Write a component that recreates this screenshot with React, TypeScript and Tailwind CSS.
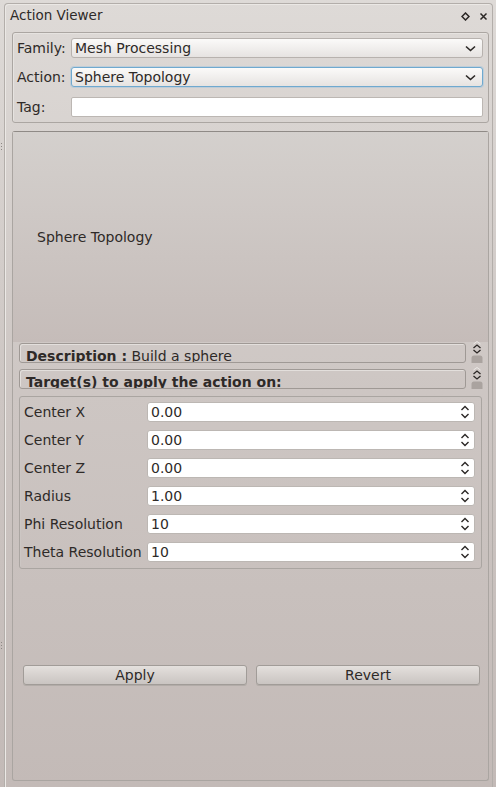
import React from "react";

const font = { fontFamily: '"DejaVu Sans", "Liberation Sans", sans-serif' };

function Chevron() {
  return (
    <svg width="11" height="7" viewBox="0 0 11 7" className="shrink-0">
      <path d="M1 1.5 L5.5 5.5 L10 1.5" fill="none" stroke="#2b2725" strokeWidth="1.6" />
    </svg>
  );
}

function SpinArrows() {
  return (
    <svg width="10" height="14" viewBox="0 0 10 14" className="shrink-0">
      <path d="M1.5 5 L5 1.5 L8.5 5" fill="none" stroke="#2b2725" strokeWidth="1.4" />
      <path d="M1.5 9 L5 12.5 L8.5 9" fill="none" stroke="#2b2725" strokeWidth="1.4" />
    </svg>
  );
}

function ScrollNub() {
  return (
    <svg width="14" height="24" viewBox="0 0 14 24" className="shrink-0">
      <path d="M3.5 4 L7 1.5 L10.5 4" fill="none" stroke="#ece9e6" strokeWidth="1" />
      <path d="M3.5 8 L7 5 L10.5 8" fill="none" stroke="#2b2725" strokeWidth="1.3" />
      <path d="M3.5 10 L7 13 L10.5 10" fill="none" stroke="#2b2725" strokeWidth="1.3" />
      <path d="M1.5 23 L1.5 18 Q1.5 15.5 4 15.5 L10 15.5 Q12.5 15.5 12.5 18 L12.5 23 Z" fill="#aaa39f" />
    </svg>
  );
}

function Combo({ value, focus }: { value: string; focus?: boolean }) {
  return (
    <div
      className={`flex-1 h-[20px] flex items-center justify-between pl-[3px] pr-[6px] rounded-[3px] border bg-gradient-to-b from-[#fbfaf9] to-[#e6e3e1] ${
        focus ? "border-[#6fa9cf] shadow-[0_0_0_1px_rgba(140,190,225,0.35)]" : "border-[#b7b2ae]"
      }`}
    >
      <span className="leading-none">{value}</span>
      <Chevron />
    </div>
  );
}

const params = [
  ["Center X", "0.00"],
  ["Center Y", "0.00"],
  ["Center Z", "0.00"],
  ["Radius", "1.00"],
  ["Phi Resolution", "10"],
  ["Theta Resolution", "10"],
];

export default function App() {
  return (
    <div
      className="relative w-[496px] h-[787px] overflow-hidden bg-gradient-to-b from-[#dedad7] via-[#cdc6c3] to-[#c3bab7] text-[14px] leading-[20px] text-[#2e2a28] pl-[4px] pr-[3px] pt-[3px]"
      style={font}
    >
      {/* splitter grips */}
      <div className="absolute left-[1px] top-[143px] flex flex-col gap-[2px]">
        <span className="w-[1px] h-[1px] bg-[#8d8884]" />
        <span className="w-[1px] h-[1px] bg-[#8d8884]" />
        <span className="w-[1px] h-[1px] bg-[#8d8884]" />
      </div>
      <div className="absolute left-[1px] top-[642px] flex flex-col gap-[2px]">
        <span className="w-[1px] h-[1px] bg-[#8d8884]" />
        <span className="w-[1px] h-[1px] bg-[#8d8884]" />
        <span className="w-[1px] h-[1px] bg-[#8d8884]" />
      </div>

      <div className="h-[784px] border-l border-t border-r border-[#b3aeaa] rounded-t-[4px] shadow-[inset_1px_1px_0_#ebe8e5] flex flex-col pl-[7px] pr-[3px]">
        {/* title bar */}
        <div className="h-[24px] flex items-center justify-between -ml-[2px] mr-[1px]">
          <span className="text-[13.5px] leading-none">Action Viewer</span>
          <div className="flex items-center gap-[9px]">
            <svg width="9" height="9" viewBox="0 0 9 9">
              <path d="M4.5 1 L8 4.5 L4.5 8 L1 4.5 Z" fill="none" stroke="#2b2725" strokeWidth="1.5" />
            </svg>
            <svg width="9" height="9" viewBox="0 0 9 9">
              <path d="M1.5 1.5 L7.5 7.5 M7.5 1.5 L1.5 7.5" fill="none" stroke="#2b2725" strokeWidth="1.5" />
            </svg>
          </div>
        </div>

        {/* selector group */}
        <div className="mt-[4px] h-[91px] border border-[#aba6a2] rounded-[3px] shadow-[inset_1px_1px_0_#e6e3e0] flex flex-col pt-[5px] pl-[4px] pr-[5px] gap-[9px]">
          <div className="flex items-center h-[20px]">
            <span className="w-[54px]">Family:</span>
            <Combo value="Mesh Processing" />
          </div>
          <div className="flex items-center h-[20px]">
            <span className="w-[54px]">Action:</span>
            <Combo value="Sphere Topology" focus />
          </div>
          <div className="flex items-center h-[20px] mt-[1px]">
            <span className="w-[54px]">Tag:</span>
            <div className="flex-1 h-[20px] bg-white border border-[#bcb7b3] rounded-[2px]" />
          </div>
        </div>

        {/* main frame */}
        <div className="mt-[8px] h-[650px] border border-[#aaa5a1] border-t-[#8f8a86] rounded-[3px] flex flex-col">
          <div className="h-[210px] flex items-center pl-[24px] bg-gradient-to-b from-[#d4d0cd] to-[#c5bcb9]">
            <span>Sphere Topology</span>
          </div>

          <div className="mt-[1px] h-[20px] flex items-start pl-[6px] gap-[4px]">
            <div className="w-[447px] shrink-0 h-[20px] overflow-hidden rounded-[3px] border border-[#9f9995] shadow-[inset_1px_1px_0_#e3dfdc] pl-[6px] pt-[4px] leading-[17px] whitespace-nowrap">
              <b>Description :</b> Build a sphere
            </div>
            <div className="-mt-[3px]">
              <ScrollNub />
            </div>
          </div>

          <div className="mt-[6px] h-[20px] flex items-start pl-[6px] gap-[4px]">
            <div className="w-[447px] shrink-0 h-[20px] overflow-hidden rounded-[3px] border border-[#9f9995] shadow-[inset_1px_1px_0_#e3dfdc] pl-[6px] pt-[4px] leading-[17px] whitespace-nowrap">
              <b>Target(s) to apply the action on:</b>
            </div>
            <div className="-mt-[3px]">
              <ScrollNub />
            </div>
          </div>

          <div className="mt-[7px] ml-[6px] mr-[6px] border border-[#aaa5a1] rounded-[3px] shadow-[inset_1px_1px_0_#ccc6c3] pt-[5px] pb-[6px] pl-[4px] pr-[6px] flex flex-col gap-[8px]">
            {params.map(([label, value]) => (
              <div key={label} className="flex items-center h-[20px]">
                <span className="w-[123px] whitespace-nowrap">{label}</span>
                <div className="flex-1 h-[20px] bg-white border border-[#bcb7b3] rounded-[3px] flex items-center justify-between pl-[3px] pr-[4px]">
                  <span className="leading-none">{value}</span>
                  <SpinArrows />
                </div>
              </div>
            ))}
          </div>

          <div className="mt-[96px] flex gap-[9px] pl-[10px] pr-[8px]">
            <button className="flex-1 h-[20px] rounded-[3px] border border-[#a19c98] bg-gradient-to-b from-[#e4e0dd] to-[#c9c4c1] shadow-[0_1px_0_#b2aca8] leading-none">
              Apply
            </button>
            <button className="flex-1 h-[20px] rounded-[3px] border border-[#a19c98] bg-gradient-to-b from-[#e4e0dd] to-[#c9c4c1] shadow-[0_1px_0_#b2aca8] leading-none">
              Revert
            </button>
          </div>
        </div>
      </div>
    </div>
  );
}
